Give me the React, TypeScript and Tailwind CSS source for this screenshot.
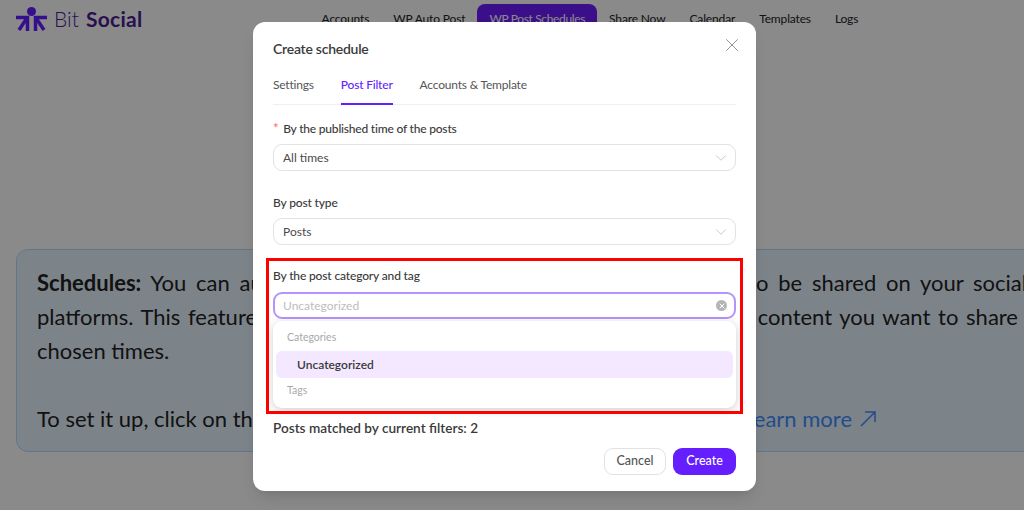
import { ChevronDown, X } from "lucide-react";

const navItems = ["Accounts", "WP Auto Post", "WP Post Schedules", "Share Now", "Calendar", "Templates", "Logs"];

function Logo() {
  return (
    <svg width="31" height="24" viewBox="0 0 31 24" fill="none" stroke="#651fff" strokeWidth="3.500">
      <circle cx="15.5" cy="4.500" r="4.500" fill="#651fff" stroke="none" />
      <path d="M0 10.500H11.500V24" />
      <path d="M11 11L3 23" />
      <path d="M31 10.500H19.500V24" />
      <path d="M20 11L28 23" />
    </svg>
  );
}

function Select({ value }: { value: string }) {
  return (
    <div className="flex h-[27px] items-center justify-between rounded-[9px] border border-[#e2e2e2] bg-white pl-[9px] pr-[5px] text-[12px] text-[#4a4a4a]">
      <span>{value}</span>
      <ChevronDown className="h-[18px] w-[18px] text-[#b5b5b5]" strokeWidth={1} />
    </div>
  );
}

export default function App() {
  return (
    <div className="relative h-[510px] w-[1024px] overflow-hidden bg-white font-['Lato',sans-serif]">
      <header className="flex h-[38px] items-center pl-4">
        <Logo />
        <span className="ml-[7px] text-[21px] font-light text-[#4c1d95]">Bit</span>
        <span className="ml-[7px] text-[21px] font-bold tracking-[0.3px] text-[#4c1d95]">Social</span>
        <nav className="ml-[167px] flex items-center text-[12px] tracking-[-0.15px] text-[#222]">
          {navItems.map((item) =>
            item === "WP Post Schedules" ? (
              <span key={item} className="rounded-lg bg-[#6f1cff] px-3 py-[6px] tracking-[-0.35px] text-white">
                {item}
              </span>
            ) : (
              <span key={item} className="px-3 py-[6px]">
                {item}
              </span>
            ),
          )}
        </nav>
      </header>

      <div className="ml-4 mt-[211px] h-[203px] w-[1040px] rounded-xl border border-[#b5d9ff] bg-[#e6f4ff] pl-5 pt-[16px] text-[22px] leading-[34px] text-[#222]">
        <p className="w-[990px] text-justify [text-align-last:justify]">
          <b>Schedules:</b> You can automatically select the WP posts you would like to be shared on your social
        </p>
        <p className="w-[981px] text-justify [text-align-last:justify]">
          platforms. This feature lets you filter and choose which posts and all the content you want to share
        </p>
        <p>chosen times.</p>
        <div className="mt-[34px] flex w-[839px] items-center justify-between">
          <span>To set it up, click on the Create schedule button and fill in the fields.</span>
          <span className="flex items-center gap-[8px] text-[#3f8cff]">
            Learn more
            <svg width="16" height="16" viewBox="0 0 16 16" fill="none" stroke="currentColor" strokeWidth="1.500">
              <path d="M1 15L15 1M5 1H15V11" />
            </svg>
          </span>
        </div>
      </div>

      <div className="absolute inset-0 bg-black/46" />

      <div className="absolute left-[253px] top-[22px] h-[469px] w-[503px] rounded-xl bg-white px-5 pt-[17px] text-[#3a3a3a] shadow-lg">
        <X className="absolute right-[13px] top-[12px] h-[22px] w-[22px] text-[#8a8a8a]" strokeWidth={1} />
        <h2 className="text-[14px] font-semibold leading-[20px] tracking-[-0.25px]">Create schedule</h2>
        <div className="mt-[17px] flex gap-[27px] border-b border-[#efefef] text-[12px] leading-[18px] tracking-[-0.2px] text-[#555]">
          <span className="pb-[10px]">Settings</span>
          <span className="-mb-px border-b-2 border-[#651fff] pb-[9px] font-medium text-[#651fff]">Post Filter</span>
          <span className="pb-[10px]">Accounts &amp; Template</span>
        </div>

        <label className="mt-[16px] block h-[16px] text-[12px] font-medium leading-[16px] tracking-[-0.2px]">
          <span className="mr-[2px] text-[13px] leading-none text-[#ff6b6b]">*</span> By the published time of the posts
        </label>
        <div className="mt-[7px]">
          <Select value="All times" />
        </div>

        <label className="mt-[24px] block text-[12px] font-medium leading-[16px] tracking-[-0.15px]">By post type</label>
        <div className="mt-[7px]">
          <Select value="Posts" />
        </div>

        <label className="mt-[23px] block text-[12px] font-medium leading-[16px] tracking-[-0.15px]">
          By the post category and tag
        </label>
        <div className="mt-[8px] flex h-[27px] items-center justify-between rounded-[9px] border-2 border-[#b394ff] bg-white pl-[8px] pr-[7px] text-[12px] text-[#bdbdbd]">
          <span>Uncategorized</span>
          <span className="flex h-[11px] w-[11px] items-center justify-center rounded-full bg-[#b5b5b5]">
            <X className="h-[8px] w-[8px] text-white" strokeWidth={3} />
          </span>
        </div>

        <div className="mt-[2px] h-[87px] rounded-[9px] bg-white px-[3px] pt-[9px] text-[10.5px] text-[#a8a8a8] shadow-[0_2px_8px_rgba(0,0,0,0.2)]">
          <div className="pl-[11px] leading-[14px]">Categories</div>
          <div className="mt-[7px] flex h-[27px] items-center rounded-md bg-[#f3e8ff] pl-[21px] text-[12px] font-semibold text-[#3a3a3a]">
            Uncategorized
          </div>
          <div className="mt-[5px] pl-[11px] leading-[14px]">Tags</div>
        </div>

        <p className="mt-[12px] text-[13.6px] font-semibold leading-[16px]">Posts matched by current filters: 2</p>

        <div className="mt-[12px] flex justify-end gap-[7px] text-[12.5px] font-medium">
          <button className="h-[27px] w-[62px] rounded-[9px] border border-[#e2e2e2] bg-white text-[#555]">Cancel</button>
          <button className="h-[27px] w-[63px] rounded-[9px] bg-[#651fff] text-white">Create</button>
        </div>
      </div>

      <div className="absolute left-[266px] top-[258px] h-[156px] w-[477px] border-[3px] border-[#ff0000]" />
    </div>
  );
}
